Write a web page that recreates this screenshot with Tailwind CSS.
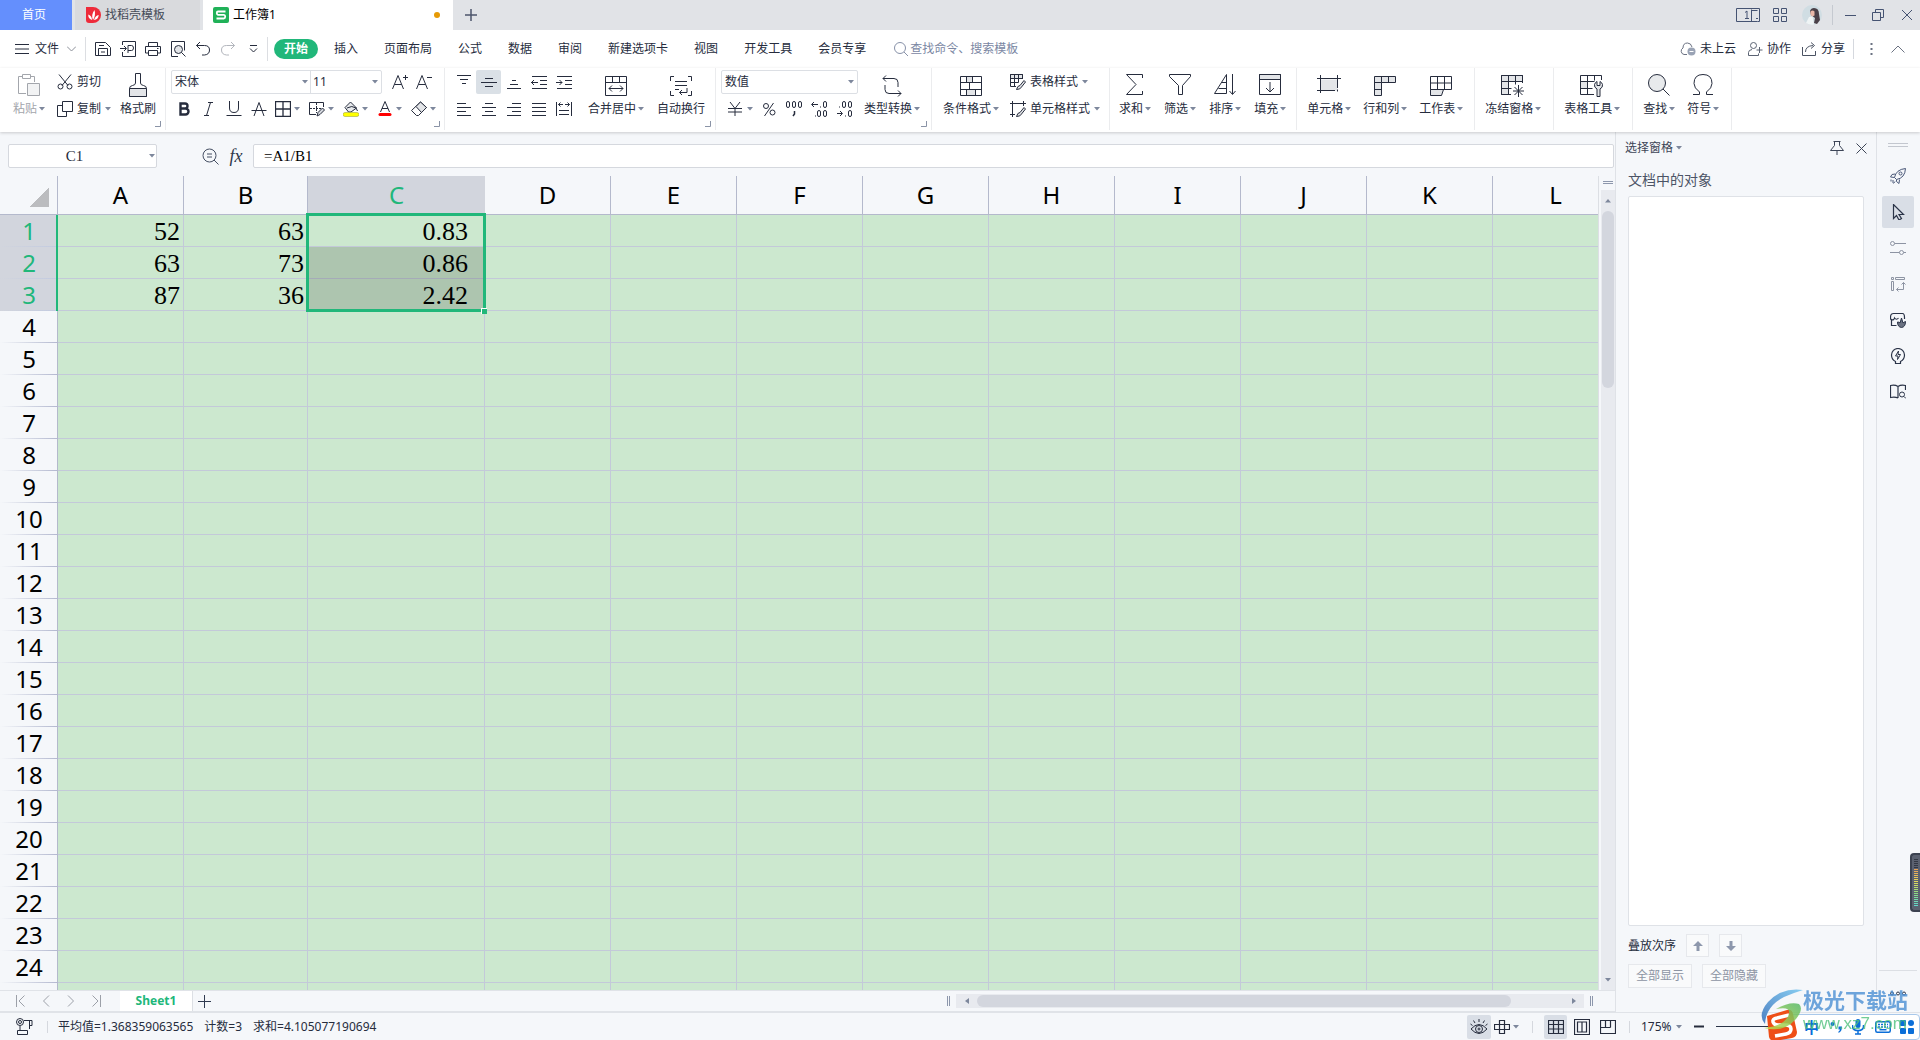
<!DOCTYPE html>
<html lang="zh-CN">
<head>
<meta charset="utf-8">
<title>工作簿1</title>
<script src="https://cdn.jsdelivr.net/npm/@tailwindcss/browser@4"></script>
</head>
<body class="bg-[#f5f7fa] text-[#262c3d] text-[12px] leading-4 font-['Noto_Sans','Noto_Sans_CJK_SC',sans-serif] overflow-hidden">
<svg class="hidden">
  <symbol id="caret" viewBox="0 0 6 4"><path d="M0 0h6L3 3.5z" fill="#7d879c" stroke="none"/></symbol>
  <symbol id="corner" viewBox="0 0 6 6"><path d="M5.500V5.500H0" fill="none" stroke="#8a93a6"/><path d="M5.500 0v5.500H0" fill="none" stroke="#8a93a6"/></symbol>
</svg>
<div class="flex h-screen flex-col whitespace-nowrap">

  <!-- Title bar -->
  <header class="flex h-[30px] shrink-0 items-stretch bg-[#e1e3e7]">
    <button class="w-[72px] bg-[#648ffd] pr-1 text-white">首页</button>
    <button class="ml-[3px] flex w-[125px] items-center gap-1 bg-[#d9dadd] pl-[11px] text-[#454b58]">
      <svg class="h-4 w-[15px]" viewBox="0 0 15 16"><path d="M0 0H7a8 8 0 0 1 0 16H3a3 3 0 0 1-3-3z" fill="#ee2b3a"/><path d="M7 13C5.500 10 6 6 8.500 3c1 3.500.5 7-1.500 10zM6 13C3 12 2 10 2.300 7.500 5 8.500 6 10.500 6 13zM8 13c1-3 2.500-4.500 4.700-5C12.500 11 11 12.500 8 13z" fill="#fff"/></svg>
      找稻壳模板
    </button>
    <button class="ml-[3px] flex w-[250px] items-center gap-1 bg-white pl-[10px] text-black">
      <svg class="size-4" viewBox="0 0 16 16"><rect width="16" height="16" rx="2" fill="#20b158"/><path d="M12.500 4.500H5Q3.800 4.500 3.800 6T5 7.800h6Q12.200 7.800 12.200 9.500T11 11.500H3.500" fill="none" stroke="#fff" stroke-width="1.800"/></svg>
      工作簿1
      <span class="mr-[13px] ml-auto size-[6px] rounded-full bg-[#e69a06]"></span>
    </button>
    <button class="w-9" aria-label="新建"><svg class="mx-auto size-3 fill-none stroke-[#4c566c] stroke-[1.5]" viewBox="0 0 12 12"><path d="M6 0v12M0 6h12"/></svg></button>
    <div class="ml-auto flex items-center pr-[7px] text-[#455372]">
      <button aria-label="窗口"><svg class="h-4 w-6 fill-none stroke-current" viewBox="0 0 24 16"><path d="M16 14.500H.5V1.500h23v13h-2"/><path d="M15.500 2.500v12h6M15.500 3.500h6M20 11.500h2"/><path d="M9 5.500l2-1.500v7.500M9 11.500h4"/></svg></button>
      <button class="ml-[13px]" aria-label="应用"><svg class="size-[14px] fill-none stroke-current" viewBox="0 0 14 14"><path d="M.5.5h5v5h-5zM8.500.5h5v5h-5zM.5 8.500h5v5h-5zM8.500 8.500h5v5h-5z"/></svg></button>
      <button class="ml-[15px]" aria-label="账户"><svg class="size-5" viewBox="0 0 20 20"><circle cx="10" cy="10" r="10" fill="#d0dde3"/><path d="M8 6q1-3 4-3 5 0 5 6l1 6-3 4-3-1 1-5-4-3z" fill="#4a4048"/><path d="M8.500 6.500q2-2 4 0v4l-2.500 1-1.500-2z" fill="#e9b7a8"/><path d="M4 18l3-6 3.500-.5 1.500 8q-4 1-8-1.500z" fill="#eff4f5"/></svg></button>
      <span class="ml-[10px] h-5 w-px bg-[#c5c9d0]"></span>
      <button class="ml-[12px]" aria-label="最小化"><svg class="size-[11px] fill-none stroke-current" viewBox="0 0 11 11"><path d="M0 5.500h11"/></svg></button>
      <button class="ml-[16px]" aria-label="还原"><svg class="size-3 fill-none stroke-current" viewBox="0 0 12 12"><path d="M.5 3.500h8v8h-8zM3.500 3.500v-3h8v8h-3"/></svg></button>
      <button class="ml-[17px]" aria-label="关闭"><svg class="size-3 fill-none stroke-current" viewBox="0 0 12 12"><path d="M1 1l10 10M11 1L1 11"/></svg></button>
    </div>
  </header>

  <!-- Menu bar -->
  <nav class="flex h-[38px] shrink-0 items-center bg-white pl-[15px]">
    <button class="flex items-center"><svg class="h-[10px] w-[14px] stroke-current" viewBox="0 0 14 10"><path d="M0 .5h14M0 5h14M0 9.500h14"/></svg><span class="ml-[6px]">文件</span>
      <svg class="ml-2 h-[6px] w-[9px] fill-none stroke-[#8b8f98]" viewBox="0 0 9 6"><path d="M0 .5l4.500 4.500L9 .5"/></svg></button>
    <span class="ml-[9px] h-6 w-px bg-[#dcdee2]"></span>
    <div class="ml-[9px] flex items-center gap-[9px]">
      <button aria-label="保存"><svg class="size-4 fill-none stroke-current" viewBox="0 0 16 16"><path d="M.5 1.500h10l5 5v8H.5zM3.500 14.500v-7h9v7M4 4.500h5M6 11h4"/></svg></button>
      <button aria-label="输出为PDF"><svg class="size-4 fill-none stroke-current" viewBox="0 0 16 16"><path d="M2.500 4V.5h13v15h-13V11M0 7.500h6M4 5l2.500 2.500L4 10M8 12V4.500h3.500q2 0 2 2.500t-2 2.500H8"/></svg></button>
      <button aria-label="打印"><svg class="size-4 fill-none stroke-current" viewBox="0 0 16 16"><path d="M3.500 5V1.500h9V5M3.500 12h-3V5.500h15V12h-3M3.500 9.500h9v5h-9zM12 7.500h1.500"/></svg></button>
      <button aria-label="打印预览"><svg class="size-4 fill-none stroke-current" viewBox="0 0 16 16"><path d="M8 15.500H1.500V.5h13v9"/><circle cx="8.500" cy="8.500" r="4" fill="#e3e5e8"/><path d="M11.500 11.500l4 4"/></svg></button>
      <button aria-label="撤消"><svg class="size-4 fill-none stroke-current" viewBox="0 0 16 16"><path d="M5 1L1.500 4.500 5 8M1.500 4.500h8q5 0 5 4.500t-5 5H7"/></svg></button>
      <button aria-label="恢复" class="text-[#b3b6bd]"><svg class="size-4 fill-none stroke-current" viewBox="0 0 16 16"><path d="M11 1l3.500 3.500L11 8M14.500 4.500h-8q-5 0-5 4.500t5 5H9"/></svg></button>
      <button aria-label="更多"><svg class="h-2 w-4 fill-none stroke-current" viewBox="0 0 16 8"><path d="M5 .5h7M5 3.500l3.500 3.500L12 3.500"/></svg></button>
    </div>
    <span class="ml-[6px] h-6 w-px bg-[#dcdee2]"></span>
    <button class="ml-[6px] h-5 w-11 rounded-full bg-[#21b77a] font-bold text-white">开始</button>
    <div class="ml-4 flex gap-[26px]">
      <button>插入</button><button>页面布局</button><button>公式</button><button>数据</button><button>审阅</button><button>新建选项卡</button><button>视图</button><button>开发工具</button><button>会员专享</button>
    </div>
    <label class="ml-[28px] flex items-center gap-[2px]"><svg class="size-[14px] fill-none stroke-[#8791a8]" viewBox="0 0 14 14"><circle cx="6" cy="6" r="5.500"/><path d="M10 10l4 4"/></svg>
      <input class="w-32 placeholder:text-[#7b87a3] outline-none" placeholder="查找命令、搜索模板" aria-label="查找命令"></label>
    <div class="ml-auto flex items-center pr-[15px]">
      <button class="flex items-center gap-1"><svg class="size-4 fill-none stroke-[#6b7282]" viewBox="0 0 16 16"><path d="M7 13.500H4a3.500 3.500 0 0 1-1-6.500Q3 2 7.500 2 11 2 12 6"/><circle cx="11.500" cy="10.500" r="4" fill="#9aa3b5" stroke="none"/><path d="M9.500 10.500h4" stroke="#fff"/></svg>未上云</button>
      <button class="ml-3 flex items-center gap-1"><svg class="h-[14px] w-[15px] fill-none stroke-[#5b6373]" viewBox="0 0 15 14"><circle cx="5.500" cy="3.500" r="3"/><path d="M4 7.500q-3.500.5-3.500 3v3h10v-2M11.500 5v6M8.500 8h6"/></svg>协作</button>
      <button class="ml-[11px] flex items-center gap-1"><svg class="h-[14px] w-[15px] fill-none stroke-[#4b5363]" viewBox="0 0 15 14"><path d="M.5 5v8.500h13V9M3.500 10q0-6 7.500-6.500M9 .5l3.500 3-3.500 3"/></svg>分享</button>
      <span class="ml-2 h-5 w-px bg-[#d5d8de]"></span>
      <button class="ml-4" aria-label="更多选项"><svg class="h-3 w-[3px] fill-[#6b7282]" viewBox="0 0 3 12"><path d="M.5 0h2v2h-2zM.5 5h2v2h-2zM.5 10h2v2h-2z"/></svg></button>
      <button class="ml-[18px]" aria-label="收起"><svg class="h-[8px] w-[14px] fill-none stroke-[#6b7282]" viewBox="0 0 14 8"><path d="M.5 7.500L7 1l6.500 6.500"/></svg></button>
    </div>
  </nav>

  <!-- Ribbon -->
  <section class="relative z-10 flex h-16 shrink-0 bg-white pb-[2px] shadow-[0_1px_3px_#0000002e] [&_svg]:fill-none [&_svg]:stroke-current">
    <div class="relative flex items-start border-r border-[#ebecee] pr-[9px] pl-[13px]">
      <button class="w-8 text-[#a3a6ac]">
        <span class="flex h-7 items-center justify-center"><svg class="mt-[6px] size-[22px]" viewBox="0 0 22 22"><path d="M8 19.500H.5v-17H4M13 2.500h3.500V8M4.500.5h8v4h-8z"/><path d="M9.500 9.500h12v12h-12z" fill="#f2f3f4"/></svg></span>
        <span class="flex h-[26px] items-center gap-[2px]">粘贴<svg class="h-1 w-[6px]"><use href="#caret"/></svg></span>
      </button>
      <div class="ml-3 flex flex-col">
        <button class="flex h-7 items-center gap-1"><svg class="size-4" viewBox="0 0 16 16"><path d="M2 .5l9 11M14 .5l-9 11"/><circle cx="3.500" cy="12.500" r="2.500"/><circle cx="12.500" cy="12.500" r="2.500"/></svg>剪切</button>
        <button class="flex h-[26px] items-center gap-1"><svg class="size-4" viewBox="0 0 16 16"><path d="M5.500.5h10v10h-10zM5 4.500H.5v11h9V11"/></svg>复制<svg class="h-1 w-[6px]"><use href="#caret"/></svg></button>
      </div>
      <button class="ml-[9px] w-9">
        <span class="flex h-7 items-center justify-center"><svg class="mt-[6px] h-6 w-[18px]" viewBox="0 0 18 24"><path d="M6.500 10V.5h5V10q0 2 3 2.500 3 .5 3 3v8H.5v-8q0-2.500 3-3 3-.5 3-2.500z"/><path d="M.5 15.500h17v8H.5z" fill="#e3e5e8"/></svg></span>
        <span class="flex h-[26px] items-center">格式刷</span>
      </button>
      <svg class="absolute right-1 bottom-[3px] size-[6px]"><use href="#corner"/></svg>
    </div>

    <div class="relative flex flex-col border-r border-[#ebecee] pr-[3px] pl-[5px]">
      <div class="flex h-7 items-center">
        <div class="flex h-6 items-center rounded-xs border border-[#dcdfe4]">
          <label class="relative flex h-full items-center border-r border-[#dcdfe4]"><select class="w-[138px] appearance-none pl-[3px]" aria-label="字体"><option>宋体</option></select><svg class="absolute right-[2px] h-1 w-[6px]"><use href="#caret"/></svg></label>
          <label class="relative flex items-center"><select class="w-[70px] appearance-none pl-[2px]" aria-label="字号"><option>11</option></select><svg class="absolute right-[3px] h-1 w-[6px]"><use href="#caret"/></svg></label>
        </div>
        <button class="ml-[6px] w-6" aria-label="增大字号"><svg class="mx-auto size-4" viewBox="0 0 16 16"><path d="M.5 15L6 1.500 11.500 15M2.500 10.500h7M11 3.500h5M13.500 1v5"/></svg></button>
        <button class="w-6" aria-label="减小字号"><svg class="mx-auto size-4" viewBox="0 0 16 16"><path d="M.5 15L6 1.500 11.500 15M2.500 10.500h7M11 3.500h5"/></svg></button>
      </div>
      <div class="flex h-[26px] items-center">
        <button class="w-[25px]" aria-label="加粗"><svg class="mx-auto size-4" viewBox="0 0 16 16"><path d="M4.500 2.500V13.500H9.500a3 3 0 0 0 0-6H4.500h4.500a2.500 2.500 0 0 0 0-5z" stroke-width="2.400"/></svg></button>
        <button class="w-[25px]" aria-label="倾斜"><svg class="mx-auto size-4" viewBox="0 0 16 16"><path d="M7 1.500h5M9.500 1.500l-4 13M3 14.500h5"/></svg></button>
        <button class="w-[25px]" aria-label="下划线"><svg class="mx-auto size-4" viewBox="0 0 16 16"><path d="M3.500 0v7q0 4.500 4.500 4.500T12.500 7V0M.5 14.500h15"/></svg></button>
        <button class="w-[25px]" aria-label="删除线"><svg class="mx-auto size-4" viewBox="0 0 16 16"><path d="M3 15L8 1.500 13 15M.5 9.500h15"/></svg></button>
        <button class="flex w-[34px] items-center gap-[3px] pl-1" aria-label="边框"><svg class="size-4" viewBox="0 0 16 16"><path d="M.5.5h15v15H.5zM8 .5v15M.5 8h15" stroke-width="1.300"/></svg><svg class="h-1 w-[6px]"><use href="#caret"/></svg></button>
        <button class="flex w-[34px] items-center gap-[3px] pl-1" aria-label="绘图边框"><svg class="size-4" viewBox="0 0 16 16"><path d="M7 13.500H.5V1.500h14V6"/><path d="M7.500 2v10M1 7.500h12" stroke-dasharray="2 1"/><path d="M8 15l1-3.500L13.500 7l2 2L11 13.500z" fill="#d5d8de"/></svg><svg class="h-1 w-[6px]"><use href="#caret"/></svg></button>
        <button class="flex w-[34px] items-center gap-[3px] pl-1" aria-label="填充颜色"><svg class="size-4" viewBox="0 0 16 16"><path d="M2 6.500L7.500 1l6 6-5.500 4H5.500z" fill="#e8eaec"/><path d="M4 7q5-3 9 0l1.500 3"/><rect y="11.500" width="16" height="4" rx="2" fill="#ffff00" stroke="#8f9440" stroke-width=".5"/></svg><svg class="h-1 w-[6px]"><use href="#caret"/></svg></button>
        <button class="flex w-[34px] items-center gap-[3px] pl-1" aria-label="字体颜色"><svg class="size-4" viewBox="0 0 16 16"><path d="M3.500 11L8 .5 12.500 11M5 7.500h6"/><rect x="1.500" y="12" width="13" height="3" rx="1.500" fill="#ff0000" stroke="none"/></svg><svg class="h-1 w-[6px]"><use href="#caret"/></svg></button>
        <button class="flex w-[34px] items-center gap-[3px] pl-1" aria-label="清除"><svg class="size-4" viewBox="0 0 16 16"><path d="M.5 9.500L9.500 1l6 5.500-8 8h-2z"/><path d="M5 5.500l5.500 6L15.500 6.500l-6-5.500z" fill="#e3e5e8"/></svg><svg class="h-1 w-[6px]"><use href="#caret"/></svg></button>
      </div>
      <svg class="absolute right-1 bottom-[3px] size-[6px]"><use href="#corner"/></svg>
    </div>

    <div class="relative flex items-start border-r border-[#ebecee] pr-[10px] pl-[6px]">
      <div>
        <div class="flex h-7 items-center">
          <button class="w-[25px]" aria-label="顶端对齐"><svg class="mx-auto size-4" viewBox="0 0 16 16"><path d="M1 1.500h14M4 5.500h8M6 9.500h4" stroke-width="1.200"/></svg></button>
          <button class="h-6 w-[25px] rounded-xs bg-[#dae0e6]" aria-label="垂直居中"><svg class="mx-auto size-4" viewBox="0 0 16 16"><path d="M4 4.500h8M0 8.500h16M4 12.500h8" stroke-width="1.200"/></svg></button>
          <button class="w-[25px]" aria-label="底端对齐"><svg class="mx-auto size-4" viewBox="0 0 16 16"><path d="M6 6.500h4M4 10.500h8M1 14.500h14" stroke-width="1.200"/></svg></button>
          <button class="w-[25px]" aria-label="减少缩进"><svg class="mx-auto size-4" viewBox="0 0 16 16"><path d="M1 2.500h15M9 6.500h7M9 10.500h7M1 14.500h15M0 8.500h7M3 6L.5 8.500 3 11"/></svg></button>
          <button class="w-[25px]" aria-label="增加缩进"><svg class="mx-auto size-4" viewBox="0 0 16 16"><path d="M1 2.500h15M9 6.500h7M9 10.500h7M1 14.500h15M0 8.500h6M3.500 6L6 8.500 3.500 11"/></svg></button>
        </div>
        <div class="flex h-[26px] items-center">
          <button class="w-[25px]" aria-label="左对齐"><svg class="mx-auto size-4" viewBox="0 0 16 16"><path d="M1 2.500h9M1 6.500h14M1 10.500h9M1 14.500h14"/></svg></button>
          <button class="w-[25px]" aria-label="居中"><svg class="mx-auto size-4" viewBox="0 0 16 16"><path d="M4 2.500h8M1 6.500h14M4 10.500h8M1 14.500h14"/></svg></button>
          <button class="w-[25px]" aria-label="右对齐"><svg class="mx-auto size-4" viewBox="0 0 16 16"><path d="M6 2.500h9M1 6.500h14M6 10.500h9M1 14.500h14"/></svg></button>
          <button class="w-[25px]" aria-label="两端对齐"><svg class="mx-auto size-4" viewBox="0 0 16 16"><path d="M1 2.500h14M1 6.500h14M1 10.500h14M1 14.500h14"/></svg></button>
          <button class="w-[25px]" aria-label="分散对齐"><svg class="mx-auto size-4" viewBox="0 0 16 16"><path d="M.5 1v14M15.500 1v14M2.500 3.500H7M9 3.500h4.500M4.500 1.500l-2 2 2 2M11.500 1.500l2 2-2 2M3 9.500h10M3 13.500h10"/></svg></button>
        </div>
      </div>
      <button class="ml-3">
        <span class="flex h-7 items-center justify-center"><svg class="mt-[7px] size-[22px]" viewBox="0 0 22 22"><path d="M.5 1.500h21v19H.5zM.5 7.500h21M7.500 1.500v6M14.500 1.500v6M4 13.500h14M7 10.500l-3 3 3 3M15 10.500l3 3-3 3"/></svg></span>
        <span class="flex h-[26px] items-center gap-[2px]">合并居中<svg class="h-1 w-[6px]"><use href="#caret"/></svg></span>
      </button>
      <button class="ml-[13px]">
        <span class="flex h-7 items-center justify-center"><svg class="mt-[7px] size-[22px]" viewBox="0 0 22 22"><path d="M4 1.500H.5V6M18 1.500h3.500V6M4 20.500H.5V16M18 20.500h3.500V16M5 6.500h12M5 10.500h12M5 14.500h4M17 13v4.500H9.500M12 15l-2.500 2.500L12 20"/></svg></span>
        <span class="flex h-[26px] items-center">自动换行</span>
      </button>
      <svg class="absolute right-1 bottom-[3px] size-[6px]"><use href="#corner"/></svg>
    </div>

    <div class="relative flex items-start border-r border-[#ebecee] pr-[11px] pl-[5px]">
      <div>
        <div class="flex h-7 items-center">
          <label class="relative flex h-6 items-center rounded-xs border border-[#dcdfe4]"><select class="w-[135px] appearance-none pl-[3px]" aria-label="数字格式"><option>数值</option></select><svg class="absolute right-[3px] h-1 w-[6px]"><use href="#caret"/></svg></label>
        </div>
        <div class="flex h-[26px] items-center">
          <button class="flex w-[35px] items-center gap-1 pl-[6px]" aria-label="货币"><svg class="size-4" viewBox="0 0 16 16"><path d="M3 1l5 6.500L13 1M8 7.500V15M1 7.500h14M1 11h14"/></svg><svg class="h-1 w-[6px]"><use href="#caret"/></svg></button>
          <button class="w-[25px]" aria-label="百分比"><svg class="mx-auto size-4" viewBox="0 0 16 16"><circle cx="5" cy="5" r="2.500"/><circle cx="11.500" cy="11.500" r="2.500"/><path d="M12.500 2l-9 13"/></svg></button>
          <button class="w-[25px]" aria-label="千位分隔"><svg class="mx-auto size-4" viewBox="0 0 16 16"><rect x=".5" y=".5" width="3" height="6" rx="1.500"/><rect x="6.500" y=".5" width="3" height="6" rx="1.500"/><rect x="12.500" y=".5" width="3" height="6" rx="1.500"/><path d="M8.500 10v3l-1.500 2" stroke-width="1.500"/></svg></button>
          <button class="w-[25px]" aria-label="增加小数"><svg class="mx-auto size-4" viewBox="0 0 16 16"><path d="M1 3.500h6M3 1L.5 3.500 3 6M9 6h1M4 15h1"/><rect x="12.500" y=".5" width="3" height="6" rx="1.500"/><rect x="6.500" y="9.500" width="3" height="6" rx="1.500"/><rect x="12.500" y="9.500" width="3" height="6" rx="1.500"/></svg></button>
          <button class="w-[25px]" aria-label="减少小数"><svg class="mx-auto size-4" viewBox="0 0 16 16"><path d="M1 12.500h5M4 10l2.500 2.500L4 15M3 6h1M9 15h1"/><rect x="6.500" y=".5" width="3" height="6" rx="1.500"/><rect x="12.500" y=".5" width="3" height="6" rx="1.500"/><rect x="12.500" y="9.500" width="3" height="6" rx="1.500"/></svg></button>
        </div>
      </div>
      <button class="ml-[6px]">
        <span class="flex h-7 items-center justify-center"><svg class="mt-[7px] size-[22px]" viewBox="0 0 22 22"><path d="M5 .5L2 3.500l3 3M2 3.500h11q4 0 4 4V12M17 21.500l3-3-3-3M20 18.500H8q-4 0-4-4V10"/></svg></span>
        <span class="flex h-[26px] items-center gap-[2px]">类型转换<svg class="h-1 w-[6px]"><use href="#caret"/></svg></span>
      </button>
      <svg class="absolute right-1 bottom-[3px] size-[6px]"><use href="#corner"/></svg>
    </div>

    <div class="flex items-start border-r border-[#ebecee] pr-[9px] pl-[11px]">
      <button>
        <span class="flex h-7 items-center justify-center"><svg class="mt-[7px] size-[22px]" viewBox="0 0 22 22"><path d="M6.500 1.500h6v6h-6zM6.500 14.500h9v6h-9z" fill="#e3e5e8"/><path d="M.5 1.500h21v19H.5zM.5 7.500h21M.5 14.500h21M6.500 1.500v6M12.500 1.500v6M9.500 7.500v7M6.500 14.500v6M15.500 14.500v6"/></svg></span>
        <span class="flex h-[26px] items-center gap-[2px]">条件格式<svg class="h-1 w-[6px]"><use href="#caret"/></svg></span>
      </button>
      <div class="ml-[11px]">
        <button class="flex h-7 items-center gap-1"><svg class="size-4" viewBox="0 0 16 16"><path d="M.5.5h12v4h-12z" fill="#e3e5e8"/><path d="M6 12.500H.5V.5h12V5M.5 4.500h12M.5 8.500h8M4.500.5v12M8.500.5v8"/><path d="M6.500 15.500q1-4 3.500-4l4-5 1.500 1.500-4 5q-1 2.500-5 2.500z" fill="#e3e5e8"/></svg>表格样式<svg class="h-1 w-[6px]"><use href="#caret"/></svg></button>
        <button class="flex h-[26px] items-center gap-1"><svg class="size-4" viewBox="0 0 16 16"><path d="M0 2.500h16M2.500 0v16M0 13.500h5M13.500 0v5"/><path d="M6.500 15.500q1-4 3.500-4l4-5 1.500 1.500-4 5q-1 2.500-5 2.500z" fill="#e3e5e8"/></svg>单元格样式<svg class="h-1 w-[6px]"><use href="#caret"/></svg></button>
      </div>
    </div>

    <div class="flex items-start gap-[13px] border-r border-[#ebecee] pr-[10px] pl-[9px]">
      <button>
        <span class="flex h-7 items-center justify-center"><svg class="mt-[6px] size-[22px]" viewBox="0 0 22 22"><path d="M18.500 4V.5h-16L12 10.500l-9.500 10h16V17"/></svg></span>
        <span class="flex h-[26px] items-center gap-[2px]">求和<svg class="h-1 w-[6px]"><use href="#caret"/></svg></span>
      </button>
      <button>
        <span class="flex h-7 items-center justify-center"><svg class="mt-[6px] size-[22px]" viewBox="0 0 22 22"><path d="M.5.5h21v2l-8 9v9h-4v-9l-9-9z"/></svg></span>
        <span class="flex h-[26px] items-center gap-[2px]">筛选<svg class="h-1 w-[6px]"><use href="#caret"/></svg></span>
      </button>
      <button>
        <span class="flex h-7 items-center justify-center"><svg class="mt-[6px] size-[22px]" viewBox="0 0 22 22"><path d="M.5 19.500L12.500.5v19zM4.500 14.500h8M8 8.500h4.500M18.500 0v20M15.500 17l3 3.500 3-3.500"/></svg></span>
        <span class="flex h-[26px] items-center gap-[2px]">排序<svg class="h-1 w-[6px]"><use href="#caret"/></svg></span>
      </button>
      <button>
        <span class="flex h-7 items-center justify-center"><svg class="mt-[6px] size-[22px]" viewBox="0 0 22 22"><path d="M.5.5h21v5H.5z" fill="#e3e5e8"/><path d="M.5.5h21v20H.5zM11 8v10M7 14l4 4 4-4"/></svg></span>
        <span class="flex h-[26px] items-center gap-[2px]">填充<svg class="h-1 w-[6px]"><use href="#caret"/></svg></span>
      </button>
    </div>

    <div class="flex items-start gap-3 border-r border-[#ebecee] pr-[11px] pl-[10px]">
      <button>
        <span class="flex h-7 items-center justify-center"><svg class="mt-[6px] h-[22px] w-6" viewBox="0 0 24 22"><path d="M3.500 5.500h17v11h-17z" fill="#e3e5e8" stroke="none"/><path d="M0 4.500h24M0 16.500h18M3.500 1v18M20.500 1v13M20.500 15.500v2"/></svg></span>
        <span class="flex h-[26px] items-center gap-[2px]">单元格<svg class="h-1 w-[6px]"><use href="#caret"/></svg></span>
      </button>
      <button>
        <span class="flex h-7 items-center justify-center"><svg class="mt-[7px] size-[22px]" viewBox="0 0 22 22"><path d="M.5 1.500h21v6h-14v13h-7z" fill="#e3e5e8"/><path d="M.5 7.500h7v-6M14.500 1.500v6M.5 14.500h7"/></svg></span>
        <span class="flex h-[26px] items-center gap-[2px]">行和列<svg class="h-1 w-[6px]"><use href="#caret"/></svg></span>
      </button>
      <button>
        <span class="flex h-7 items-center justify-center"><svg class="mt-[7px] size-[22px]" viewBox="0 0 22 22"><path d="M.5 14.500h13l-2 6H.5z" fill="#e3e5e8"/><path d="M.5 1.500h21v13H.5zM.5 8h21M7.500 1.500v13M14.500 1.500v13"/></svg></span>
        <span class="flex h-[26px] items-center gap-[2px]">工作表<svg class="h-1 w-[6px]"><use href="#caret"/></svg></span>
      </button>
    </div>

    <div class="flex items-start border-r border-[#ebecee] pr-[12px] pl-[10px]">
      <button>
        <span class="flex h-7 items-center justify-center"><svg class="mt-[7px] h-[22px] w-6" viewBox="0 0 24 22"><path d="M.5.5h21v6h-14v13h-7z" fill="#e3e5e8"/><path d="M21.500 8V.5H.5v19H10M.5 6.500h21M.5 13.500h10M7.500.5v19M14.500.5v9M17.500 10v12M12 16h11M13.500 12l8 8M21.500 12l-8 8"/></svg></span>
        <span class="flex h-[26px] items-center gap-[2px]">冻结窗格<svg class="h-1 w-[6px]"><use href="#caret"/></svg></span>
      </button>
    </div>
    <div class="flex items-start border-r border-[#ebecee] pr-[12px] pl-[10px]">
      <button>
        <span class="flex h-7 items-center justify-center"><svg class="mt-[7px] h-[22px] w-6" viewBox="0 0 24 22"><path d="M.5 6.500h7v7h-7z" fill="#e3e5e8"/><path d="M21.500 5V.5H.5v19H14M.5 6.500h14M.5 13.500h12M7.500.5v19M14.500.5v5"/><path d="M17 21.500V14q-3-1.500-2.500-4.500.5-2 2.500-3v4h3v-4q2 1 2.500 3 .5 3-2.500 4.500v7.500z" fill="#e3e5e8"/></svg></span>
        <span class="flex h-[26px] items-center gap-[2px]">表格工具<svg class="h-1 w-[6px]"><use href="#caret"/></svg></span>
      </button>
    </div>
    <div class="flex items-start gap-3 border-r border-[#ebecee] pr-[12px] pl-[10px]">
      <button>
        <span class="flex h-7 items-center justify-center"><svg class="mt-[6px] size-[22px]" viewBox="0 0 22 22"><circle cx="9" cy="9" r="8.500" fill="#e8eaec"/><path d="M15 15l6.500 6.500"/></svg></span>
        <span class="flex h-[26px] items-center gap-[2px]">查找<svg class="h-1 w-[6px]"><use href="#caret"/></svg></span>
      </button>
      <button>
        <span class="flex h-7 items-center justify-center"><svg class="mt-[6px] size-[22px]" viewBox="0 0 22 22"><path d="M1 20.500h6.500V18Q2 14 2 9.500 2 .5 11 .5t9 9q0 4.500-5.500 8.500v2.500H21"/></svg></span>
        <span class="flex h-[26px] items-center gap-[2px]">符号<svg class="h-1 w-[6px]"><use href="#caret"/></svg></span>
      </button>
    </div>
  </section>

  <div class="flex min-h-0 flex-1">
    <!-- Sheet -->
    <main class="flex min-w-0 flex-1 flex-col">
      <div class="flex h-11 shrink-0 items-center pt-1 pr-[1px] pl-2">
        <label class="relative flex items-center"><input class="h-6 w-[149px] rounded-xs border border-[#d5d8de] bg-white pr-4 text-center font-['Liberation_Serif',serif] text-[15px] outline-none" value="C1" aria-label="名称框"><svg class="absolute right-[2px] h-1 w-[6px]"><use href="#caret"/></svg></label>
        <button class="ml-[45px]" aria-label="浏览公式"><svg class="size-[17px] fill-none stroke-[#454f63]" viewBox="0 0 17 17"><circle cx="7.500" cy="7.500" r="6.500"/><path d="M5 6h5M5 9h5M12 12l4.500 4.500"/></svg></button>
        <button class="ml-[9px] w-4 font-['Liberation_Serif',serif] text-[18px] leading-5 text-[#2f384c] italic" aria-label="插入函数">fx</button>
        <input class="ml-[9px] h-6 min-w-0 flex-1 rounded-xs border border-[#d5d8de] bg-white px-[10px] font-['Liberation_Serif',serif] text-[15px] text-black outline-none" value="=A1/B1" aria-label="编辑栏">
      </div>
      <div class="flex min-h-0 flex-1">
        <div class="min-w-0 flex-1 overflow-hidden">
          <table class="w-[1619px] table-fixed border-separate border-spacing-0 bg-[#cce8cf] text-black">
            <colgroup><col class="w-[58px]"><col class="w-[126px]"><col class="w-[124px]"><col class="w-[177px]"><col class="w-[126px]" span="9"></colgroup>
            <thead><tr id="heads" class="h-[39px] bg-[#f5f7fa] text-[24px] leading-8"></tr></thead>
            <tbody id="cells"></tbody>
          </table>
        </div>
        <div class="flex w-[17px] flex-col border-l border-[#dcdfe4] pl-[2px]">
          <span class="mx-auto mt-[5px] mb-[6px] h-[3px] w-[10px] border-y border-[#8d97ac]"></span>
          <div class="flex flex-1 flex-col items-center bg-[#e8eaef]">
            <button class="flex h-[21px] items-center" aria-label="向上滚动"><svg class="h-1 w-[6px]" viewBox="0 0 6 4"><path d="M0 3.500h6L3 0z" fill="#7d879c"/></svg></button>
            <span class="h-[177px] w-3 rounded-full bg-[#d3d6de]"></span>
            <button class="mt-auto flex h-5 items-center" aria-label="向下滚动"><svg class="h-1 w-[6px]"><use href="#caret"/></svg></button>
          </div>
        </div>
      </div>
      <div class="flex h-[22px] shrink-0 items-center border-y border-[#e0e3e8] pr-[22px]">
        <div class="flex w-[120px] items-center gap-[17px] pl-4 text-[#9ca0a8]">
          <button aria-label="首张"><svg class="h-3 w-[9px] fill-none stroke-current" viewBox="0 0 9 12"><path d="M.5 0v12M8.500 .5L3 6l5.500 5.500"/></svg></button>
          <button aria-label="上一张"><svg class="h-3 w-[8px] fill-none stroke-current" viewBox="0 0 8 12"><path d="M7 .5L1.500 6 7 11.500"/></svg></button>
          <button aria-label="下一张"><svg class="h-3 w-[8px] fill-none stroke-current" viewBox="0 0 8 12"><path d="M1 .5L6.500 6 1 11.500"/></svg></button>
          <button aria-label="末张"><svg class="h-3 w-[9px] fill-none stroke-current" viewBox="0 0 9 12"><path d="M8.500 0v12M.5 .5L6 6 .5 11.500"/></svg></button>
        </div>
        <button class="h-5 w-[73px] border-r border-[#dcdfe4] bg-white text-[12px] font-bold text-[#21b77a]">Sheet1</button>
        <button class="ml-[5px]" aria-label="新建工作表"><svg class="size-[13px] stroke-[#303a50]" viewBox="0 0 13 13"><path d="M6.500 0v13M0 6.500h13"/></svg></button>
        <span class="ml-auto h-[10px] w-[3px] border-x border-[#8d97ac]"></span>
        <div class="ml-[6px] flex h-[14px] w-[628px] items-center bg-[#e8eaef]">
          <button class="flex w-[21px] justify-center" aria-label="向左滚动"><svg class="h-[6px] w-1" viewBox="0 0 4 6"><path d="M4 0v6L0 3z" fill="#7d879c"/></svg></button>
          <span class="h-3 w-[534px] rounded-full bg-[#d3d6de]"></span>
          <button class="ml-auto flex w-5 justify-center" aria-label="向右滚动"><svg class="h-[6px] w-1" viewBox="0 0 4 6"><path d="M0 0v6l4-3z" fill="#7d879c"/></svg></button>
        </div>
        <span class="ml-[6px] h-[10px] w-[3px] border-x border-[#8d97ac]"></span>
      </div>
    </main>

    <!-- Selection pane -->
    <aside class="flex w-[261px] shrink-0 flex-col border-l border-[#dfe2e7] pr-[12px] pl-3">
      <div class="-ml-[3px] flex h-8 items-center text-[#3d4557]">
        <button class="flex items-center gap-[3px]">选择窗格<svg class="h-1 w-[6px]"><use href="#caret"/></svg></button>
        <button class="ml-auto" aria-label="固定"><svg class="size-[14px] fill-none stroke-current" viewBox="0 0 14 14"><path d="M3.500.5h7M4.500.5v4l-4 5h13l-4-5v-4M7 9.500V14"/></svg></button>
        <button class="mr-[-3px] ml-3" aria-label="关闭窗格"><svg class="size-[11px] fill-none stroke-current" viewBox="0 0 11 11"><path d="M.5.5l10 10M10.500.5l-10 10"/></svg></button>
      </div>
      <h2 class="flex h-8 items-center text-[14px] leading-5 text-[#4c5466]">文档中的对象</h2>
      <div class="flex-1 rounded-xs border border-[#dfe2e7] bg-white"></div>
      <div class="mt-2 flex h-[23px] items-center">叠放次序
        <button class="ml-[10px] flex h-[23px] w-[23px] items-center justify-center border border-[#e6e8ec] bg-[#f9fafb]" aria-label="上移"><svg class="size-[10px] fill-[#8d97ac]" viewBox="0 0 10 10"><path d="M5 0l5 5H6.500v5h-3V5H0z"/></svg></button>
        <button class="ml-[10px] flex h-[23px] w-[23px] items-center justify-center border border-[#e6e8ec] bg-[#f9fafb]" aria-label="下移"><svg class="size-[10px] fill-[#8d97ac]" viewBox="0 0 10 10"><path d="M5 10l5-5H6.500V0h-3v5H0z"/></svg></button>
      </div>
      <div class="mt-[7px] mb-6 flex gap-[10px] text-[#8d94a3]">
        <button class="h-6 w-16 border border-[#e6e8ec] bg-[#f9fafb]">全部显示</button>
        <button class="h-6 w-16 border border-[#e6e8ec] bg-[#f9fafb]">全部隐藏</button>
      </div>
    </aside>

    <!-- Tool rail -->
    <aside class="flex w-[44px] shrink-0 flex-col items-center border-l border-[#dfe2e7] pr-[1px] text-[#2b3448] [&_svg]:fill-none [&_svg]:stroke-current">
      <span class="mt-[11px] h-1 w-5 shrink-0 border-y border-[#c3c7cf]"></span>
      <div class="mt-[13px] flex flex-col items-center gap-1">
        <button class="grid size-8 place-items-center text-[#4a5878]" aria-label="加速"><svg class="size-4" viewBox="0 0 16 16"><path d="M4.500 9.500Q6 1.500 15.500.5q-.5 9.500-9 11zM5 6L2 6.500.5 9l4 .5M9.500 11.500l-.5 4-2.500-2v-2M1 11.500v2M3 12v3M5 13.500l-1.500 2"/><circle cx="10.500" cy="5.500" r="1.500"/></svg></button>
        <button class="grid size-8 place-items-center rounded-xs bg-[#d9dee6]" aria-label="选择"><svg class="size-4" viewBox="0 0 16 16"><path d="M3.500.5v14l3-3 2.500 4.500 2.500-1.500L9 10.500h4.500z" stroke-width="1.200"/></svg></button>
        <button class="grid size-8 place-items-center text-[#8d94a3]" aria-label="属性"><svg class="size-4" viewBox="0 0 16 16"><circle cx="2.500" cy="3.500" r="2"/><circle cx="11.500" cy="12.500" r="2"/><path d="M4.500 3.500H16M0 12.500h9.500M13.500 12.500H16"/></svg></button>
        <button class="grid size-8 place-items-center text-[#8d94a3]" aria-label="分析"><svg class="size-4" viewBox="0 0 16 16"><path d="M1.500 1.500h2v2h-2zM5.500 1.500h9v2h-9zM1.500 5.500h2v9h-2zM13.500 6.500v7h-7M11.500 8.500l2-2 2 2M8.500 11.500l-2 2 2 2"/></svg></button>
        <button class="grid size-8 place-items-center" aria-label="模板"><svg class="size-4" viewBox="0 0 16 16"><path d="M6.500 13.500h-5V8Q.5 7.500.5 5.500q0-4 3-4h9q2 0 2 4V7M1.500 7.500q2.500 1 3-1.500 2 2.500 4 0" stroke-width="1.200"/><path d="M7.500 10q2 0 2.500 1l1.500-5 1.500 5q1-1 2.500-1.500 0 5.500-4 6-4-.5-4-5.500z" fill="#6b7282"/></svg></button>
        <button class="grid size-8 place-items-center" aria-label="灵感"><svg class="size-4" viewBox="0 0 16 16"><path d="M5.500 15.500v-2Q1.500 11.500 1.500 7A6.500 6.500 0 0 1 14.500 7q0 4.500-4 6.500v2z" stroke-width="1.200"/><path d="M8.500 3L5.500 8H8l-.5 3.500 3-5H8z"/></svg></button>
        <button class="grid size-8 place-items-center" aria-label="查阅"><svg class="size-4" viewBox="0 0 16 16"><path d="M8 14q-3-1.500-7.500-.5v-12Q5 .5 8 2.500v11.500M8 2.500q3-2 7.500-1V6" stroke-width="1.200"/><circle cx="12" cy="10.500" r="2.500"/><path d="M14 12.500l2 2"/></svg></button>
      </div>
      <span class="mt-auto h-px w-[38px] bg-[#dcdfe4]"></span>
      <button class="mt-5 mb-4" aria-label="更多工具"><svg class="h-[5px] w-4" viewBox="0 0 16 5"><circle cx="2" cy="2.500" r="1.500"/><circle cx="8" cy="2.500" r="1.500"/><circle cx="14" cy="2.500" r="1.500"/></svg></button>
    </aside>
  </div>

  <!-- Status bar -->
  <footer class="flex h-7 shrink-0 items-center border-t border-[#e0e3e8] pl-4">
    <button aria-label="宏"><svg class="size-[17px] fill-none stroke-current" viewBox="0 0 17 17"><circle cx="4" cy="4" r="3.500"/><circle cx="4" cy="4" r="1.500"/><path d="M8 2.500h8v5h-2.500V2.500M13.500 7v4M4 8v4.500M1.500 12.500h10v4h-10z"/></svg></button>
    <span class="ml-[14px] h-3 w-px bg-[#d5d8de]"></span>
    <p class="ml-[10px] flex gap-[11px]"><span>平均值=1.368359063565</span><span>计数=3</span><span>求和=4.105077190694</span></p>
    <div class="ml-auto flex w-[453px] items-center [&_svg]:fill-none [&_svg]:stroke-current">
      <button class="grid h-6 w-6 place-items-center rounded-xs bg-[#d9dee6]" aria-label="护眼模式"><svg class="h-4 w-[18px]" viewBox="0 0 18 16"><path d="M1 10q8-9 16 0-8 9-16 0zM9 0v3M3.500 1.500l1.500 2.500M14.500 1.500L13 4M.5 5l2 1.500M17.500 5l-2 1.500"/><circle cx="9" cy="10" r="3.500"/><circle cx="9" cy="10" r="1"/></svg></button>
      <button class="ml-[3px] flex items-center gap-[3px]" aria-label="阅读模式"><svg class="size-4" viewBox="0 0 16 16"><path d="M5.500 1.500h5v13h-5zM.5 5.500h15v5H.5z" stroke-width="1.200"/></svg><svg class="h-1 w-[6px]"><use href="#caret"/></svg></button>
      <span class="ml-[13px] h-3 w-px bg-[#d5d8de]"></span>
      <button class="ml-[11px] grid h-6 w-[23px] place-items-center rounded-xs bg-[#d9dee6]" aria-label="普通视图"><svg class="size-4" viewBox="0 0 16 16"><path d="M.5 1.500h15v13H.5zM.5 5.500h15M.5 10h15M5.500 1.500v13M10.500 1.500v13" stroke-width="1.200"/></svg></button>
      <button class="ml-[7px]" aria-label="页面布局视图"><svg class="size-4" viewBox="0 0 16 16"><path d="M.5.500h15v15H.5zM3.500 3h4.500v10h-4.500zM8 3h4.500v10H8z" stroke-width="1.200"/></svg></button>
      <button class="ml-[10px]" aria-label="分页预览"><svg class="size-4" viewBox="0 0 16 16"><path d="M.5 1.500h15v13H.5zM5.500 1.500v7M10.500 1.500v7M.5 8.500h10" stroke-width="1.200"/></svg></button>
      <span class="ml-[13px] h-3 w-px bg-[#d5d8de]"></span>
      <button class="ml-[11px] flex items-center gap-1">175%<svg class="h-1 w-[6px]"><use href="#caret"/></svg></button>
      <button class="ml-3" aria-label="缩小"><svg class="h-[3px] w-[10px]" viewBox="0 0 10 3"><path d="M0 1.500h10" stroke-width="2"/></svg></button>
      <span class="ml-3 h-px flex-1 bg-[#2b3448]"></span>
    </div>
  </footer>
</div>

<!-- Level meter docked to the screen edge -->
<div class="fixed right-0 bottom-32 z-20 flex h-[59px] w-[10px] flex-col gap-px rounded-l-sm border-2 border-r-0 border-[#3c4250] bg-[#5b6170] py-1 pl-[2px]">
  <span class="h-[9px] w-1 bg-[repeating-linear-gradient(#333844_0_1px,#5b6170_1px_2px)]"></span>
  <span class="h-[37px] w-1 bg-[repeating-linear-gradient(transparent_0_1px,#5b6170_1px_2px),linear-gradient(#e9a055,#e3dc5c_35%,#8fdc80_65%,#5fd8cf)]"></span>
</div>

<!-- Input method bar -->
<div class="fixed right-0 bottom-0 z-20 flex h-[26px] w-[150px] items-center rounded-sm border border-[#a9c8ea] bg-white pl-[33px] text-[#0b6ed8]">
  <span class="text-[15px] leading-5 font-bold">中</span>
  <svg class="ml-[11px] h-4 w-3 fill-current" viewBox="0 0 12 16"><circle cx="2.500" cy="5" r="2"/><path d="M8.500 7.500h3.500q0 5-3.500 6.500v-1.500q1.500-1 1.500-2H8.500z"/></svg>
  <svg class="ml-[10px] h-4 w-3 fill-current" viewBox="0 0 12 16"><rect x="3.500" y="0" width="5" height="9" rx="2.500"/><path d="M.5 6v1q0 4.500 5.500 4.500T11.500 7V6M6 11v4M3 15h6" fill="none" stroke="currentColor" stroke-width="1.500"/></svg>
  <svg class="ml-[11px] h-3 w-4 fill-none stroke-current stroke-[1.5]" viewBox="0 0 16 12"><rect x=".75" y=".75" width="14.500" height="10.500" rx="1.500"/><path d="M3 3.500h10M3 6h10" stroke-dasharray="2 1"/><path d="M4.500 8.700h7"/></svg>
  <svg class="ml-[9px] size-[14px] fill-current" viewBox="0 0 14 14"><rect width="6" height="6" rx="1"/><rect x="8" width="6" height="6" rx="3"/><rect y="8" width="6" height="6" rx="1"/><rect x="8" y="8" width="6" height="6" rx="1"/></svg>
</div>
<div class="fixed right-3 bottom-0 z-30 flex h-[52px] items-start">
  <svg class="h-[52px] w-[43px]" viewBox="0 0 43 52">
    <defs><linearGradient id="blue" x1="0" y1="1" x2="1" y2="0"><stop offset="0" stop-color="#3c74bd"/><stop offset="1" stop-color="#7cc8f0"/></linearGradient><linearGradient id="green" x1="0" y1="1" x2="1" y2="0"><stop offset="0" stop-color="#c9dc45"/><stop offset="1" stop-color="#55b867"/></linearGradient></defs>
    <path d="M7 28L27 22q5-1 6 4l4 18q0 5-5 6l-17 3q-5 0-6-4z" fill="#ee4e16"/>
    <path d="M29 27l-12 3q-5 1-4 4t5 3h7q6 0 6 4t-5 5l-11 2" fill="none" stroke="#fff" stroke-width="3.500"/>
    <path d="M43 2Q22-1 8 14-3 27 5 36 6 18 24 9 33 5 43 2z" fill="url(#blue)" opacity=".9"/>
    <path d="M16 21q14-8 23-5 5 5-3 15Q24 45 4 40q21-2 25-14Q31 18 16 21z" fill="url(#green)" opacity=".85"/>
  </svg>
  <p class="text-[21px] leading-6 font-bold text-[#4b8fd3]/80">极光下载站<a href="#" class="block font-['Liberation_Sans',sans-serif] text-[17px] leading-6 font-normal text-[#4fc07c]/80">www.xz7.com</a></p>
</div>

<script>
  const data = { 1: ['52', '63', '0.83'], 2: ['63', '73', '0.86'], 3: ['87', '36', '2.42'] };
  const cols = 'ABCDEFGHIJKL'.split('');
  document.getElementById('heads').innerHTML =
    '<th class="border-r border-b border-[#b4b9cc] p-0"><span class="mt-1 ml-[29px] block size-5 bg-[linear-gradient(135deg,transparent_50%,#bbbcbf_50%)]"></span></th>' +
    cols.map(c => c === 'C'
      ? '<th scope="col" class="border-b border-[#b4b9cc] bg-[#d2d5dd] p-0 font-normal text-[#21b77a]">C</th>'
      : `<th scope="col" class="border-r border-b border-[#b4b9cc] p-0 font-normal">${c}</th>`).join('') + '<th class="border-b border-[#b4b9cc] p-0"></th>';
  let rows = '';
  for (let r = 1; r <= 25; r++) {
    const v = data[r] || [];
    const label = r < 25 ? r : '';
    rows += '<tr class="h-8">' + (r <= 3
      ? `<th scope="row" class="border-r-2 border-[#21b77a] bg-[#d2d5dd] bg-[linear-gradient(to_right,#d2d5dd,#c3cbe0)] bg-[length:100%_1px] bg-bottom bg-no-repeat p-0 pl-[2px] text-[24px] leading-[30px] font-normal text-[#21b77a]">${label}</th>`
      : `<th scope="row" class="border-r border-[#b4b9cc] bg-[#f5f7fa] bg-[linear-gradient(to_right,#f5f7fa,#b4b9d0)] bg-[length:100%_1px] bg-bottom bg-no-repeat p-0 pl-[1px] text-[24px] leading-[30px] font-normal">${label}</th>`) +
      cols.map((c, i) => {
        if (c === 'C' && r === 1) return `<td class="relative border-r border-b border-[#c3c9d9] p-0 pt-[3px] pr-4 text-right font-['Liberation_Serif',serif] text-[26px] leading-7">${v[i]}<span class="pointer-events-none absolute -top-[2px] -left-[2px] h-[99px] w-[180px] border-3 border-[#21b77a]"></span><span class="absolute top-[93px] -right-[3px] z-10 size-[6px] border-t border-l border-white bg-[#21b77a]"></span></td>`;
        if (c === 'C' && r <= 3) return `<td class="border-r border-b border-[#a5abb8] bg-[#adc5af] p-0 pt-[3px] pr-4 text-right font-['Liberation_Serif',serif] text-[26px] leading-7">${v[i]}</td>`;
        return `<td class="border-r border-b border-[#c3c9d9] p-0 pt-[3px] pr-[3px] text-right font-['Liberation_Serif',serif] text-[26px] leading-7">${v[i] || ''}</td>`;
      }).join('') + '<td></td></tr>';
  }
  document.getElementById('cells').innerHTML = rows;
</script>
</body>
</html>
